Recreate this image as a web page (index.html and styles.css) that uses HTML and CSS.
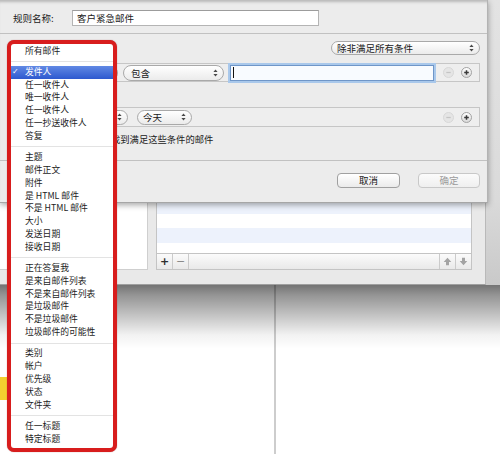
FILE: index.html
```html
<!DOCTYPE html>
<html lang="zh-CN">
<head>
<meta charset="utf-8">
<title>规则</title>
<link rel="stylesheet" href="styles.css">
</head>
<body>
<div class="screen">
  <div class="upper">
    <div class="rules-window">
      <div class="rules-content">
        <div class="left-panel"></div>
        <div class="rule-list">
          <div class="rows">
            <div class="row alt"></div>
            <div class="row"></div>
            <div class="row alt"></div>
            <div class="row"></div>
            <div class="row alt"></div>
            <div class="row"></div>
            <div class="row alt tall"></div>
            <div class="row short"></div>
          </div>
          <div class="list-bar">
            <span class="bar-btn plus">+</span>
            <span class="bar-btn minus">−</span>
            <span class="bar-spacer"></span>
            <span class="bar-btn arrow left-line"><svg viewBox="0 0 9 9"><path d="M4.5 0.8 L8.3 5 H6 V8.3 H3 V5 H0.7Z" fill="#a3a3a3"/></svg></span>
            <span class="bar-btn arrow left-line"><svg viewBox="0 0 9 9"><path d="M4.5 8.2 L8.3 4 H6 V0.7 H3 V4 H0.7Z" fill="#a3a3a3"/></svg></span>
          </div>
        </div>
      </div>
    </div>
    <div class="side-strip"></div>
  </div>

  <div class="lower">
    <div class="main-left"><div class="yellow"></div></div>
    <div class="splitter"></div>
    <div class="main-right"></div>
    <div class="shadow"></div>
  </div>

  <div class="sheet">
    <div class="name-row">
      <span class="name-label">规则名称:</span>
      <div class="field name-field">客户紧急邮件</div>
    </div>
    <div class="hsep first-sep"></div>
    <div class="header-row">
      <div class="popup wide"><span>除非满足所有条件</span><svg viewBox="0 0 5 8"><path d="M0.4 3.1 L2.5 0.6 L4.6 3.1Z M0.4 4.9 L2.5 7.4 L4.6 4.9Z" fill="#4a4a4a"/></svg></div>
    </div>
    <div class="cond-box box-one">
      <div class="popup p-from"><span></span><svg viewBox="0 0 5 8"><path d="M0.4 3.1 L2.5 0.6 L4.6 3.1Z M0.4 4.9 L2.5 7.4 L4.6 4.9Z" fill="#4a4a4a"/></svg></div>
      <div class="popup p-contains"><span>包含</span><svg viewBox="0 0 5 8"><path d="M0.4 3.1 L2.5 0.6 L4.6 3.1Z M0.4 4.9 L2.5 7.4 L4.6 4.9Z" fill="#4a4a4a"/></svg></div>
      <div class="field focus"><span class="caret"></span></div>
      <span class="circle off"><svg viewBox="0 0 9 9"><path d="M2.3 4.5 H6.7" stroke="#c4c4c4" stroke-width="1.2"/></svg></span>
      <span class="circle on"><svg viewBox="0 0 9 9"><path d="M2.2 4.5 H6.8 M4.5 2.2 V6.8" stroke="#3a3a3a" stroke-width="1.5"/></svg></span>
    </div>
    <div class="cond-box box-two">
      <div class="popup p-action"><span></span><svg viewBox="0 0 5 8"><path d="M0.4 3.1 L2.5 0.6 L4.6 3.1Z M0.4 4.9 L2.5 7.4 L4.6 4.9Z" fill="#4a4a4a"/></svg></div>
      <div class="popup p-today"><span>今天</span><svg viewBox="0 0 5 8"><path d="M0.4 3.1 L2.5 0.6 L4.6 3.1Z M0.4 4.9 L2.5 7.4 L4.6 4.9Z" fill="#4a4a4a"/></svg></div>
      <span class="grow"></span>
      <span class="circle off"><svg viewBox="0 0 9 9"><path d="M2.3 4.5 H6.7" stroke="#c4c4c4" stroke-width="1.2"/></svg></span>
      <span class="circle on"><svg viewBox="0 0 9 9"><path d="M2.2 4.5 H6.8 M4.5 2.2 V6.8" stroke="#3a3a3a" stroke-width="1.5"/></svg></span>
    </div>
    <div class="note">找到满足这些条件的邮件</div>
    <div class="hsep second-sep"></div>
    <div class="button-row">
      <div class="btn">取消</div>
      <div class="btn disabled">确定</div>
    </div>
  </div>

  <div class="menu">
    <div class="item">所有邮件</div>
    <div class="msep"></div>
    <div class="item sel"><span class="check">✓</span>发件人</div>
    <div class="item">任一收件人</div>
    <div class="item">唯一收件人</div>
    <div class="item">任一收件人</div>
    <div class="item">任一抄送收件人</div>
    <div class="item">答复</div>
    <div class="msep"></div>
    <div class="item">主题</div>
    <div class="item">邮件正文</div>
    <div class="item">附件</div>
    <div class="item">是 HTML 邮件</div>
    <div class="item">不是 HTML 邮件</div>
    <div class="item">大小</div>
    <div class="item">发送日期</div>
    <div class="item">接收日期</div>
    <div class="msep"></div>
    <div class="item">正在答复我</div>
    <div class="item">是来自邮件列表</div>
    <div class="item">不是来自邮件列表</div>
    <div class="item">是垃圾邮件</div>
    <div class="item">不是垃圾邮件</div>
    <div class="item">垃圾邮件的可能性</div>
    <div class="msep"></div>
    <div class="item">类别</div>
    <div class="item">帐户</div>
    <div class="item">优先级</div>
    <div class="item">状态</div>
    <div class="item">文件夹</div>
    <div class="msep"></div>
    <div class="item">任一标题</div>
    <div class="item">特定标题</div>
  </div>
</div>
</body>
</html>
```

FILE: styles.css
```css
* { box-sizing: border-box; }
html, body { margin: 0; padding: 0; }
body {
  width: 500px;
  height: 454px;
  overflow: hidden;
  background: #ffffff;
  font-family: "Noto Sans CJK SC", "Noto Sans", sans-serif;
  color: #1e1e1e;
}
.screen { position: relative; width: 500px; height: 454px; overflow: hidden; }

/* ---------- window behind the sheet ---------- */
.upper { display: flex; height: 285px; }
.rules-window {
  width: 486px;
  height: 285px;
  flex: none;
  background: #e9e9e9;
  border-right: 1px solid #b9b9b9;
  border-bottom: 1px solid #9f9f9f;
  display: flex;
  flex-direction: column;
  justify-content: flex-end;
  padding: 0 13px 14px 0;
}
.rules-content { display: flex; gap: 8px; height: 110px; }
.left-panel {
  width: 148px;
  background: #ffffff;
  border-right: 1px solid #cfcfcf;
  border-bottom: 1px solid #cfcfcf;
}
.rule-list {
  flex: 1;
  display: flex;
  flex-direction: column;
  border: 1px solid #c4c4c4;
  border-top: none;
  background: #ffffff;
}
.rows {
  flex: 1;
  display: flex;
  flex-direction: column;
  justify-content: flex-end;
  overflow: hidden;
}
.row { height: 14px; flex: none; background: #ffffff; }
.row.alt { background: #edf2fc; }
.row.tall { height: 15px; }
.row.short { height: 10px; }
.list-bar {
  height: 16px;
  flex: none;
  display: flex;
  background: linear-gradient(#fbfbfb, #e9e9e9);
  border-top: 1px solid #c4c4c4;
}
.bar-btn {
  width: 16px;
  display: flex;
  align-items: center;
  justify-content: center;
  border-right: 1px solid #cbcbcb;
  font-family: "DejaVu Sans", sans-serif;
  font-size: 11px;
  line-height: 1;
}
.bar-btn.plus { color: #2e2e2e; font-weight: bold; }
.bar-btn.minus { color: #8a8a8a; }
.bar-btn.left-line { border-right: none; border-left: 1px solid #cbcbcb; }
.bar-btn svg { width: 9px; height: 9px; }
.bar-spacer { flex: 1; }
.side-strip { flex: 1; background: linear-gradient(#e3e3e3, #dadada 70%, #c9c9c9); }

/* ---------- desktop below ---------- */
.lower { position: relative; display: flex; height: 169px; }
.main-left { width: 274px; padding-top: 92px; background: #ffffff; }
.yellow { width: 9px; height: 23px; background: #f3cf2f; }
.splitter { width: 2px; background: #cdcdcd; }
.main-right { flex: 1; background: #ffffff; }
.shadow {
  position: absolute;
  left: 0;
  top: 0;
  right: 0;
  height: 64px;
  background: linear-gradient(rgba(0,0,0,0.55), rgba(0,0,0,0.42) 10px, rgba(0,0,0,0.2) 34px, rgba(0,0,0,0.05) 50px, rgba(0,0,0,0));
}

/* ---------- sheet ---------- */
.sheet {
  position: absolute;
  left: 0;
  top: 0;
  width: 488px;
  height: 203px;
  background: #ececec;
  border-right: 1px solid #b3b3b3;
  border-bottom: 1px solid #a6a6a6;
  box-shadow: 0 2px 6px rgba(0,0,0,0.35), inset 0 4px 3px -2px rgba(0,0,0,0.22);
  display: flex;
  flex-direction: column;
  font-size: 9.5px;
  color: #202020;
}
.name-row { display: flex; align-items: center; padding: 10px 0 0 13px; }
.name-label { width: 59px; line-height: 16px; }
.field {
  height: 16px;
  background: #ffffff;
  border: 1px solid #b4b4b4;
  border-top-color: #9c9c9c;
  display: flex;
  align-items: center;
  padding-left: 4px;
  line-height: 14px;
}
.name-field { width: 247px; }
.hsep { height: 1px; background: #c1c1c1; flex: none; }
.first-sep { margin-top: 7px; }
.second-sep { margin-top: 15px; }
.header-row { display: flex; justify-content: flex-end; padding-right: 7px; margin-top: 7px; }

.popup {
  height: 16px;
  display: flex;
  align-items: center;
  justify-content: space-between;
  border: 1px solid #a9a9a9;
  border-radius: 8px;
  background: linear-gradient(#ffffff, #ebebeb);
  padding: 0 5px 0 6px;
  line-height: 14px;
  white-space: nowrap;
  flex: none;
}
.popup svg { width: 5px; height: 8px; flex: none; }
.popup.wide { width: 149px; height: 14px; padding-left: 5px; }

.cond-box {
  display: flex;
  align-items: center;
  margin: 8px 7px 0 12px;
  height: 19px;
  border: 1px solid #c6c6c6;
  background: #eeeeee;
  padding: 0 7px 0 5px;
}
.box-two { margin-top: 25px; height: 20px; }
.p-from { width: 100px; }
.p-contains { width: 101px; margin-left: 5px; padding-left: 7px; }
.field.focus {
  width: 204px;
  margin-left: 6px;
  border: 1px solid #6f96c8;
  box-shadow: 0 0 0 2px #a9c8eb;
  background: #f8fbff;
  padding-left: 2px;
}
.caret { width: 1px; height: 11px; background: #111111; }
.circle {
  width: 11px;
  height: 11px;
  border-radius: 50%;
  display: flex;
  align-items: center;
  justify-content: center;
  flex: none;
}
.circle svg { width: 9px; height: 9px; }
.circle.off { background: #e5e5e5; border: 1px solid #d8d8d8; margin-left: 9px; }
.circle.on { background: linear-gradient(#ffffff, #d9d9d9); border: 1px solid #a3a3a3; margin-left: 7px; }
.p-action { width: 110px; height: 15px; }
.p-today { width: 55px; height: 15px; margin-left: 9px; padding-left: 5px; }
.grow { flex: 1; }

.note { margin: 6px 0 0 111px; font-size: 9.3px; line-height: 12px; height: 12px; }

.button-row { display: flex; justify-content: flex-end; gap: 18px; padding-right: 7px; margin-top: 12px; }
.btn {
  width: 63px;
  height: 15px;
  border: 1px solid #a0a0a0;
  border-radius: 4px;
  background: linear-gradient(#ffffff, #ebebeb);
  display: flex;
  align-items: center;
  justify-content: center;
  line-height: 13px;
  color: #1a1a1a;
}
.btn.disabled { width: 62px; border-color: #c8c8c8; color: #9b9b9b; background: linear-gradient(#fbfbfb, #efefef); }

/* ---------- popup menu with red outline ---------- */
.menu {
  position: absolute;
  left: 7px;
  top: 40px;
  width: 110px;
  height: 412px;
  background: #ffffff;
  border: 4px solid #d81d1d;
  border-radius: 7px;
  padding-top: 0.6px;
  font-size: 8.8px;
  line-height: 12.8px;
  color: #1c1c1c;
  box-shadow: 0 0 1px rgba(120,0,0,0.6);
  overflow: hidden;
}
.item { height: 12.8px; padding-left: 14px; white-space: nowrap; position: relative; }
.item.sel { background: linear-gradient(#6189e4, #2d59cf); color: #ffffff; }
.check {
  position: absolute;
  left: 1px;
  top: 0;
  font-family: "DejaVu Sans", sans-serif;
  font-weight: bold;
  font-size: 8px;
  line-height: 12.8px;
  color: #ffffff;
}
.msep { height: 8.5px; display: flex; align-items: center; }
.msep::after { content: ""; flex: 1; height: 1px; background: #e3e3e3; }
```
